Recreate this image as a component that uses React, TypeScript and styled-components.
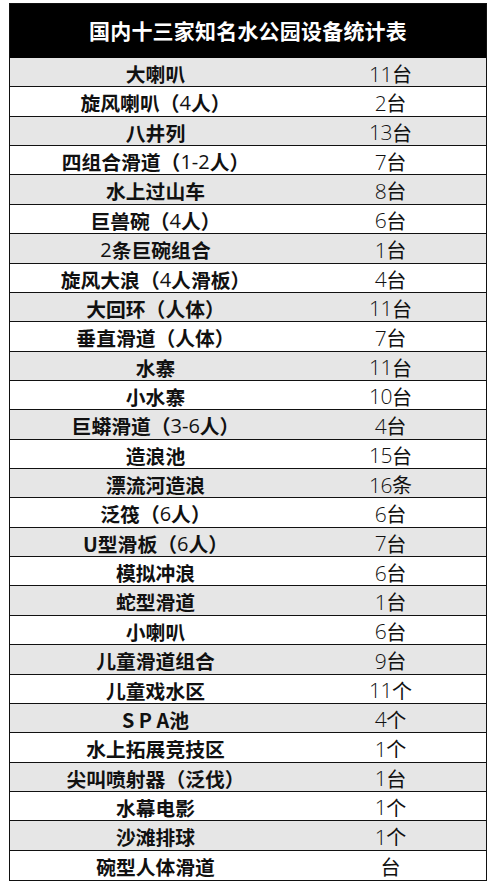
import React from "react";
import styled, { createGlobalStyle } from "styled-components";

const Global = createGlobalStyle`
  html, body { margin: 0; padding: 0; background: #ffffff; }
  body { width: 500px; height: 886px; overflow: hidden; }
`;

const Page = styled.div`
  padding: 3px 13px 0 9px;
`;

const Table = styled.div`
  width: 478px;
  box-sizing: border-box;
  border: 1.5px solid #111;
  display: flex;
  flex-direction: column;
`;

const Header = styled.div`
  height: 54px;
  background: #000;
  color: #fff;
  display: flex;
  align-items: center;
  justify-content: center;
  font-family: "Noto Sans CJK SC", "Noto Sans", sans-serif;
  font-weight: 700;
  font-size: 21px;
  letter-spacing: 0.2px;
  padding-bottom: 2px;
  box-sizing: border-box;
`;

const Row = styled.div<{ $shade: boolean; $last?: boolean }>`
  height: 29.36px;
  box-sizing: border-box;
  display: grid;
  grid-template-columns: 291px 1fr;
  background: ${(p) => (p.$shade ? "#e6e6e6" : "#ffffff")};
  border-bottom: ${(p) => (p.$last ? "none" : "1.5px solid #111")};
`;

const NameCell = styled.div`
  display: flex;
  align-items: center;
  justify-content: center;
  font-family: "Noto Sans CJK SC", "Noto Sans", sans-serif;
  font-weight: 700;
  font-size: 19.8px;
  color: #111;
  white-space: pre;
  padding-top: 1px;
`;

const Light = styled.span`
  font-family: "Open Sans", "Noto Sans CJK SC", sans-serif;
  font-weight: 400;
  font-size: 20px;
`;

const CountCell = styled.div`
  display: flex;
  align-items: center;
  justify-content: center;
  font-family: "Open Sans", "Noto Sans CJK SC", sans-serif;
  font-weight: 300;
  font-size: 21px;
  letter-spacing: -0.5px;
  color: #111;
  padding-top: 1px;
  padding-right: 6px;
`;

const Unit = styled.span`
  font-family: "Noto Sans CJK SC", sans-serif;
  font-weight: 400;
  font-size: 20px;
  letter-spacing: 0;
`;

const rows: [string, string][] = [
  ["大喇叭", "11台"],
  ["旋风喇叭（4人）", "2台"],
  ["八井列", "13台"],
  ["四组合滑道（1-2人）", "7台"],
  ["水上过山车", "8台"],
  ["巨兽碗（4人）", "6台"],
  ["2条巨碗组合", "1台"],
  ["旋风大浪（4人滑板）", "4台"],
  ["大回环（人体）", "11台"],
  ["垂直滑道（人体）", "7台"],
  ["水寨", "11台"],
  ["小水寨", "10台"],
  ["巨蟒滑道（3-6人）", "4台"],
  ["造浪池", "15台"],
  ["漂流河造浪", "16条"],
  ["泛筏（6人）", "6台"],
  ["U型滑板（6人）", "7台"],
  ["模拟冲浪", "6台"],
  ["蛇型滑道", "1台"],
  ["小喇叭", "6台"],
  ["儿童滑道组合", "9台"],
  ["儿童戏水区", "11个"],
  ["S P A池", "4个"],
  ["水上拓展竞技区", "1个"],
  ["尖叫喷射器（泛伐）", "1台"],
  ["水幕电影", "1个"],
  ["沙滩排球", "1个"],
  ["碗型人体滑道", "台"],
];

function renderName(s: string) {
  const parts = s.split(/([0-9-]+)/);
  return parts.map((p, i) =>
    /^[0-9-]+$/.test(p) ? <Light key={i}>{p}</Light> : <React.Fragment key={i}>{p}</React.Fragment>
  );
}

function renderCount(s: string) {
  const m = s.match(/^([0-9]*)(.*)$/);
  const num = m ? m[1] : "";
  const unit = m ? m[2] : s;
  return (
    <>
      {num}
      <Unit>{unit}</Unit>
    </>
  );
}

export default function App() {
  return (
    <>
      <Global />
      <Page>
        <Table>
          <Header>国内十三家知名水公园设备统计表</Header>
          {rows.map(([name, count], i) => (
            <Row key={i} $shade={i % 2 === 0} $last={i === rows.length - 1}>
              <NameCell>{renderName(name)}</NameCell>
              <CountCell>{renderCount(count)}</CountCell>
            </Row>
          ))}
        </Table>
      </Page>
    </>
  );
}
